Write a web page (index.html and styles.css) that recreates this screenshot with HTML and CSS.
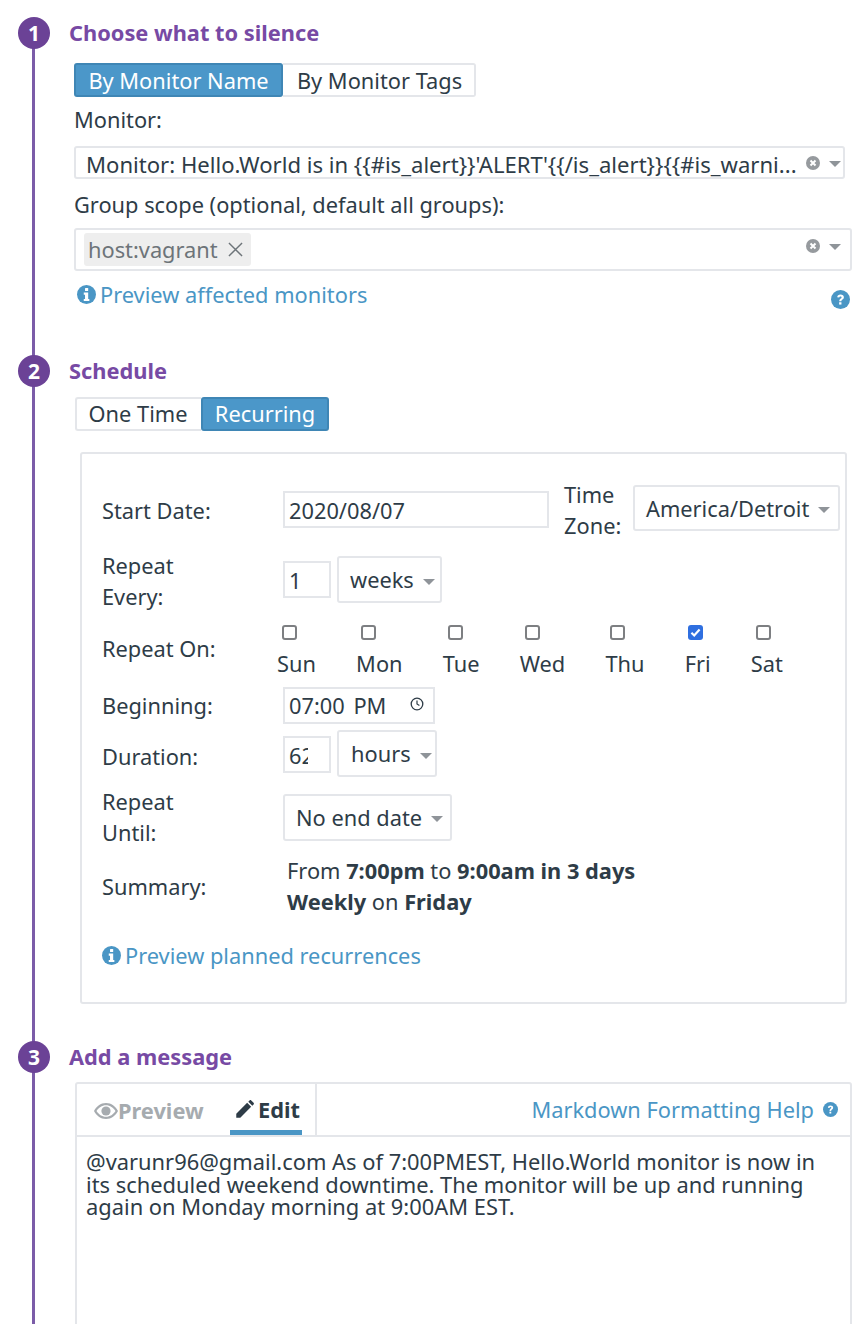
FILE: index.html

```html
<!DOCTYPE html>
<html lang="en">
<head>
  <meta charset="UTF-8" />
  <title>Silence monitor</title>
  <link rel="stylesheet" href="styles.css">
</head>
<body>
  <svg class="defs" width="0" height="0">
    <symbol id="info" viewBox="0 0 18 18">
      <circle cx="9" cy="9" r="9" fill="currentColor"/>
      <rect x="7.6" y="2.9" width="3" height="2.8" rx=".5" fill="#fff"/>
      <path d="M6.4 7.2h4.2v6h1.1v2H6.4v-2h1.2v-4H6.4z" fill="#fff"/>
    </symbol>
    <symbol id="help" viewBox="0 0 18 18">
      <circle cx="9" cy="9" r="9" fill="currentColor"/>
      <path d="M5.9 6.9C6 5.2 7.3 4.3 9 4.3c1.800 0 3.200 1 3.200 2.600 0 2.300-2.400 2.100-2.400 3.800H7.800c0-2.700 2.200-2.500 2.200-3.700 0-.6-.4-.9-1-.9-.7 0-1.100.4-1.200 1.100z" fill="#fff"/>
      <rect x="7.700" y="11.600" width="2.200" height="2.200" fill="#fff"/>
    </symbol>
    <symbol id="clear" viewBox="0 0 14 14">
      <circle cx="7" cy="7" r="7" fill="#969a9e"/>
      <path d="M4.500 4.500l5 5M9.500 4.500l-5 5" stroke="#fff" stroke-width="2"/>
    </symbol>
    <symbol id="caret" viewBox="0 0 12 6">
      <path d="M0 0h12L6 6z" fill="#8f9499"/>
    </symbol>
  </svg>

  <main class="timeline">
    <section>
      <h2 class="step-head"><span class="step-num">1</span>Choose what to silence</h2>
      <div class="toggle toggle-first">
        <span class="toggle-btn active name-btn">By Monitor Name</span>
        <span class="toggle-btn tags-btn">By Monitor Tags</span>
      </div>
      <div class="field-label monitor-label">Monitor:</div>
      <div class="select monitor-select">
        <span class="select-text">Monitor: Hello.World is in {{#is_alert}}'ALERT'{{/is_alert}}{{#is_warni...</span>
        <svg class="clear-icon"><use href="#clear"/></svg>
        <svg class="caret"><use href="#caret"/></svg>
      </div>
      <div class="field-label scope-label">Group scope (optional, default all groups):</div>
      <div class="select scope-select">
        <span class="chip">host:vagrant
          <svg class="chip-x" viewBox="0 0 16 16"><path d="M1 1l14 14M15 1L1 15" stroke="#6d7479" stroke-width="1.500"/></svg>
        </span>
        <svg class="clear-icon"><use href="#clear"/></svg>
        <svg class="caret"><use href="#caret"/></svg>
      </div>
      <div class="link-row">
        <a class="link" href="#"><svg class="info-icon"><use href="#info"/></svg>Preview affected monitors</a>
        <svg class="help-icon"><use href="#help"/></svg>
      </div>
    </section>

    <section class="step-schedule">
      <h2 class="step-head"><span class="step-num">2</span>Schedule</h2>
      <div class="toggle toggle-second">
        <span class="toggle-btn once-btn">One Time</span>
        <span class="toggle-btn active recur-btn">Recurring</span>
      </div>
      <div class="schedule-box">
        <div class="row row-start">
          <div class="row-label">Start Date:</div>
          <div class="input date-input">2020/08/07</div>
          <div class="tz-label">Time<br>Zone:</div>
          <div class="dropdown tz-select">America/Detroit<svg class="caret"><use href="#caret"/></svg></div>
        </div>
        <div class="row row-every">
          <div class="row-label">Repeat<br>Every:</div>
          <div class="input num-input">1</div>
          <div class="dropdown unit-select weeks">weeks<svg class="caret"><use href="#caret"/></svg></div>
        </div>
        <div class="row row-on">
          <div class="row-label">Repeat On:</div>
          <div class="days">
            <label class="day"><span class="check"></span>Sun</label>
            <label class="day"><span class="check"></span>Mon</label>
            <label class="day"><span class="check"></span>Tue</label>
            <label class="day"><span class="check"></span>Wed</label>
            <label class="day"><span class="check"></span>Thu</label>
            <label class="day day-fri"><span class="check checked"><svg viewBox="0 0 14 14"><path d="M3.200 7.200l2.600 2.600 5-5.600" fill="none" stroke="#fff" stroke-width="2"/></svg></span>Fri</label>
            <label class="day"><span class="check"></span>Sat</label>
          </div>
        </div>
        <div class="row row-begin">
          <div class="row-label">Beginning:</div>
          <div class="input time-input">07:00 PM
            <svg class="clock" viewBox="0 0 14 14"><circle cx="7" cy="7" r="5.800" fill="none" stroke="#2e3c47" stroke-width="1.300"/><path d="M7 3.500V7l2.400 1.500" fill="none" stroke="#2e3c47" stroke-width="1.200"/></svg>
          </div>
        </div>
        <div class="row row-duration">
          <div class="row-label">Duration:</div>
          <div class="input num-input"><span class="clip">62</span></div>
          <div class="dropdown unit-select hours">hours<svg class="caret"><use href="#caret"/></svg></div>
        </div>
        <div class="row row-until">
          <div class="row-label">Repeat<br>Until:</div>
          <div class="dropdown until-select">No end date<svg class="caret"><use href="#caret"/></svg></div>
        </div>
        <div class="row row-summary">
          <div class="row-label">Summary:</div>
          <div class="summary">From <b>7:00pm</b> to <b>9:00am in 3 days</b><br><b>Weekly</b> on <b>Friday</b></div>
        </div>
        <a class="link planned-link" href="#"><svg class="info-icon"><use href="#info"/></svg>Preview planned recurrences</a>
      </div>
    </section>

    <section class="step-message">
      <h2 class="step-head"><span class="step-num">3</span>Add a message</h2>
      <div class="editor">
        <div class="tabs">
          <div class="tab-group">
            <span class="tab tab-preview">
              <svg class="eye" viewBox="0 0 24 16"><path d="M12 0C6.500 0 2.500 3.500 0 8c2.500 4.500 6.500 8 12 8s9.500-3.500 12-8c-2.500-4.500-6.500-8-12-8zm0 13.800C7.800 13.800 4.700 11.300 2.500 8 4.700 4.700 7.800 2.200 12 2.200S19.300 4.700 21.500 8c-2.200 3.300-5.300 5.800-9.500 5.800z" fill="#a6abaf"/><circle cx="12" cy="8" r="4.600" fill="#a6abaf"/></svg>Preview
            </span>
            <span class="tab tab-edit">
              <svg class="pencil" viewBox="0 0 18 18"><path d="M1.200 13L11.500 2.700l3.800 3.800L5 16.800H1.200zM12.600 1.600L13.800.4c.5-.5 1.100-.5 1.600 0l2.200 2.200c.5.500.5 1.100 0 1.600l-1.200 1.200z" fill="#2e3c47"/></svg>Edit
            </span>
          </div>
          <a class="md-help" href="#">Markdown Formatting Help<svg class="md-icon"><use href="#help"/></svg></a>
        </div>
        <div class="message">@varunr96@gmail.com As of 7:00PMEST, Hello.World monitor is now in its scheduled weekend downtime. The monitor will be up and running again on Monday morning at 9:00AM EST.</div>
      </div>
    </section>
  </main>
</body>
</html>
```

FILE: styles.css

```css
html, body {
  margin: 0;
  height: 1324px;
  overflow: hidden;
}
body {
  font-family: "Noto Sans", "Open Sans", sans-serif;
  font-size: 21.8px;
  line-height: 31px;
  color: #2e3c47;
  background: #fff;
}
.defs {
  display: block;
  height: 0;
}
.timeline {
  position: relative;
  padding: 17px 0 0 74px;
  height: 1307px;
  overflow: hidden;
}
/* purple line behind the numbers */
.timeline::before {
  content: "";
  position: absolute;
  left: 32px;
  top: 33px;
  bottom: 0;
  width: 3px;
  background: #7b5ca8;
}
.step-head {
  display: flex;
  align-items: center;
  height: 32px;
  margin: 0 0 0 -56px;
  font-size: 21.8px;
  line-height: 30px;
  font-weight: 700;
  color: #774aa4;
}
.step-num {
  position: relative;
  flex: none;
  width: 32px;
  height: 32px;
  margin-right: 19px;
  border-radius: 50%;
  background: #6b4296;
  color: #fff;
  font-size: 21px;
  line-height: 32px;
  text-align: center;
}
.step-schedule {
  margin-top: 46px;
}
.step-message {
  margin-top: 37px;
}

/* toggles */
.toggle {
  display: flex;
  height: 34px;
  box-sizing: border-box;
}
.toggle-first {
  margin-top: 14px;
  width: 402px;
}
.toggle-second {
  margin: 10px 0 0 1px;
  width: 254px;
}
.toggle-second .toggle-btn {
  line-height: 29px;
}
.toggle-btn {
  box-sizing: border-box;
  border: 2px solid #e4e6ea;
  line-height: 32px;
  text-align: center;
  white-space: nowrap;
}
.toggle-btn.active {
  background: #4b97c9;
  border-color: #3f86b5;
  color: #fff;
  border-radius: 3px;
}
.name-btn { width: 209px; }
.tags-btn { width: 193px; border-left: 0; border-radius: 0 3px 3px 0; padding-left: 2px; }
.once-btn { width: 126px; border-right: 0; border-radius: 3px 0 0 3px; padding-right: 2px; }
.recur-btn { width: 128px; }

/* select boxes */
.field-label {
  height: 30px;
  line-height: 30px;
}
.monitor-label { margin-top: 8px; }
.scope-label { margin-top: 11px; }
.select {
  display: flex;
  align-items: center;
  box-sizing: border-box;
  border: 2px solid #e4e6ea;
  border-radius: 3px;
  background: #fff;
}
.monitor-select {
  width: 771px;
  height: 33px;
  margin-top: 11px;
  padding-left: 10px;
}
.scope-select {
  width: 778px;
  height: 43px;
  margin-top: 8px;
  padding-left: 8px;
}
.select-text {
  flex: 1;
  padding-top: 3px;
  font-size: 22.1px;
  white-space: nowrap;
}
.chip {
  display: flex;
  align-items: center;
  box-sizing: border-box;
  width: 167px;
  height: 33px;
  padding-left: 4px;
  margin-right: auto;
  border-radius: 3px;
  background: #eeeeee;
  color: #6d7479;
}
.chip-x {
  width: 15px;
  height: 15px;
  margin-left: 10px;
}
.clear-icon {
  flex: none;
  width: 14px;
  height: 14px;
  margin-right: 9px;
}
.caret {
  flex: none;
  width: 12px;
  height: 6px;
}
.monitor-select .caret { margin: 2px 2px 0 0; }
.monitor-select .clear-icon { margin-top: 1px; }
.scope-select .caret { margin: -6px 9px 0 0; }
.scope-select .clear-icon { margin-top: -7px; }

/* links */
.link {
  display: inline-flex;
  align-items: center;
  color: #4a96c5;
  text-decoration: none;
}
.info-icon {
  width: 19px;
  height: 19px;
  margin-right: 4px;
  color: #4a96c5;
}
.link-row {
  display: flex;
  justify-content: space-between;
  width: 776px;
  height: 30px;
  margin-top: 8px;
  margin-bottom: 1px;
  padding-left: 3px;
  box-sizing: border-box;
}
.help-icon {
  align-self: flex-end;
  width: 19px;
  height: 19px;
  color: #4a96c5;
}

/* schedule box */
.schedule-box {
  box-sizing: border-box;
  width: 767px;
  margin: 21px 0 0 6px;
  padding: 25px 0 30px 20px;
  border: 2px solid #e4e6ea;
  border-radius: 3px;
}
.row {
  display: flex;
  align-items: center;
}
.row-label {
  flex: none;
  width: 181px;
}
.row-start { height: 62px; }
.row-every { height: 63px; margin-top: 8px; }
.row-on { height: 57px; margin-top: 11px; }
.row-begin { height: 37px; margin-top: 7px; }
.row-duration { height: 47px; margin-top: 7px; }
.row-until { height: 62px; margin-top: 8px; }
.row-summary { height: 62px; margin-top: 7px; }
.row-on .row-label { margin-top: -6px; }
.row-duration .row-label { margin-top: 4px; }
.row-every .input, .row-every .dropdown, .row-duration .dropdown { margin-top: -2px; }
.input, .dropdown {
  box-sizing: border-box;
  border: 2px solid #e4e6ea;
  white-space: nowrap;
}
.input {
  height: 37px;
  padding-left: 4px;
  line-height: 36px;
}
.date-input { width: 266px; margin-top: -2px; }
.num-input { width: 48px; }
.clip {
  display: block;
  width: 19px;
  overflow: hidden;
}
.time-input {
  display: flex;
  align-items: center;
  justify-content: space-between;
  width: 152px;
  padding-right: 9px;
  line-height: 33px;
  word-spacing: 3px;
}
.clock {
  width: 14px;
  height: 14px;
  margin-top: -4px;
}
.tz-label {
  width: 69px;
  margin-left: 15px;
}
.dropdown {
  display: flex;
  align-items: center;
  height: 47px;
  border-radius: 3px;
}
.dropdown .caret {
  margin: 4px 0 0 9px;
}
.tz-select {
  width: 207px;
  height: 46px;
  padding-left: 11px;
  margin-top: -4px;
}
.unit-select {
  margin-left: 6px;
}
.weeks {
  width: 105px;
  padding-left: 11px;
}
.hours {
  width: 100px;
  padding-left: 12px;
}
.until-select {
  width: 169px;
  padding-left: 11px;
}
.days {
  display: flex;
  gap: 40.2px;
  margin-left: -6px;
}
.day {
  display: flex;
  flex-direction: column;
  align-items: flex-start;
}
.check {
  box-sizing: border-box;
  width: 15px;
  height: 15px;
  margin: 1px 0 8px 5px;
  border: 2px solid #7d7f82;
  border-radius: 3px;
  background: #fff;
}
.check.checked {
  border: 0;
  background: #2f6fe0;
}
.check svg {
  display: block;
}
.day-fri .check {
  margin-left: 3px;
}
.summary {
  margin-left: 4px;
}
.planned-link {
  margin-top: 23px;
}

/* editor */
.editor {
  box-sizing: border-box;
  width: 777px;
  height: 400px;
  margin: 9px 0 0 1px;
  border: 2px solid #e4e6ea;
  border-radius: 3px 3px 0 0;
}
.tabs {
  display: flex;
  justify-content: space-between;
  height: 51px;
  border-bottom: 2px solid #e4e6ea;
}
.tab-group {
  display: flex;
  box-sizing: border-box;
  width: 240px;
  height: 51px;
  padding-left: 17px;
  border-right: 2px solid #e4e6ea;
}
.tab {
  display: flex;
  align-items: center;
  box-sizing: border-box;
  font-weight: 700;
  height: 51px;
}
.tab-preview {
  width: 136px;
  padding-top: 2px;
  color: #a6abaf;
}
.eye {
  width: 24px;
  height: 16px;
}
.tab-edit {
  width: 72px;
  padding: 5px 0 0 5px;
  border-bottom: 5px solid #4a96c5;
}
.pencil {
  width: 19px;
  height: 19px;
  margin-right: 4px;
}
.md-help {
  display: flex;
  align-items: center;
  padding-right: 12px;
  color: #4a96c5;
  text-decoration: none;
}
.md-icon {
  width: 15px;
  height: 15px;
  margin-left: 9px;
  color: #4a96c5;
}
.message {
  padding: 14px 30px 0 9px;
  font-size: 21.88px;
  line-height: 22.500px;
}
```
